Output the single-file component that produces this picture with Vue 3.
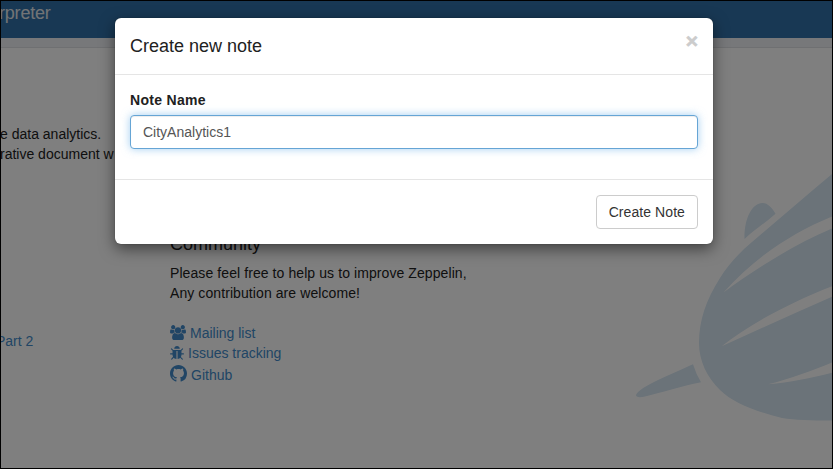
<script setup>
import { ref } from 'vue'

const noteName = ref('CityAnalytics1')

const links = [
  {
    label: 'Mailing list',
    kind: 'users',
    box: '0 0 1920 1792',
    path: 'M593 896q-162 5-265 128h-134q-82 0-138-40.5t-56-118.5q0-353 124-353 6 0 43.5 21t97.5 42.5 119 21.5q67 0 133-23-5 37-5 66 0 139 81 256zm1071 637q0 120-73 189.5t-194 69.5h-874q-121 0-194-69.5t-73-189.5q0-53 3.5-103.5t14-109 26.5-108.5 43-97.5 62-81 85.5-53.5 111.5-20q10 0 43 21.5t73 48 107 48 135 21.5 135-21.5 107-48 73-48 43-21.5q61 0 111.5 20t85.5 53.5 62 81 43 97.5 26.5 108.5 14 109 3.5 103.5zm-1024-1277q0 106-75 181t-181 75-181-75-75-181 75-181 181-75 181 75 75 181zm704 384q0 159-112.5 271.5t-271.5 112.5-271.5-112.5-112.5-271.5 112.5-271.5 271.5-112.5 271.5 112.5 112.5 271.5zm576 225q0 78-56 118.5t-138 40.5h-134q-103-123-265-128 81-117 81-256 0-29-5-66 66 23 133 23 59 0 119-21.5t97.5-42.5 43.5-21q124 0 124 353zm-128-609q0 106-75 181t-181 75-181-75-75-181 75-181 181-75 181 75 75 181z'
  },
  {
    label: 'Issues tracking',
    kind: 'bug',
    box: '96 64 1600 1600',
    path: 'M1696 960q0 26-19 45t-45 19h-224q0 171-67 290l208 209q19 19 19 45t-19 45q-18 19-45 19t-45-19l-198-197q-5 5-15 13t-42 28.5-65 36.5-82 29-97 13v-896h-128v896q-51 0-101.5-13.5t-87-33-66-39-43.5-32.5l-15-14-183 207q-20 21-48 21-24 0-43-16-19-18-20.5-44.5t15.5-46.5l202-227q-58-114-58-274h-224q-26 0-45-19t-19-45 19-45 45-19h224v-294l-173-173q-19-19-19-45t19-45 45-19 45 19l173 173h844l173-173q19-19 45-19t45 19 19 45-19 45l-173 173v294h224q26 0 45 19t19 45zm-480-576h-640q0-133 93.5-226.5t226.5-93.5 226.5 93.5 93.5 226.5z'
  },
  {
    label: 'Github',
    kind: 'github',
    box: '0 0 16 16',
    path: 'M8 0C3.58 0 0 3.58 0 8c0 3.54 2.29 6.53 5.47 7.59.4.07.55-.17.55-.38 0-.19-.01-.82-.01-1.49-2.01.37-2.53-.49-2.69-.94-.09-.23-.48-.94-.82-1.13-.28-.15-.68-.52-.01-.53.63-.01 1.08.58 1.23.82.72 1.21 1.87.87 2.33.66.07-.52.28-.87.51-1.07-1.78-.2-3.64-.89-3.64-3.95 0-.87.31-1.59.82-2.15-.08-.2-.36-1.02.08-2.12 0 0 .67-.21 2.2.82.64-.18 1.32-.27 2-.27s1.36.09 2 .27c1.53-1.04 2.2-.82 2.2-.82.44 1.1.16 1.92.08 2.12.51.56.82 1.27.82 2.15 0 3.07-1.87 3.75-3.65 3.95.29.25.54.73.54 1.48 0 1.07-.01 1.93-.01 2.2 0 .21.15.46.55.38A8.01 8.01 0 0 0 16 8c0-4.42-3.58-8-8-8z'
  }
]
</script>

<template>
  <div class="screen">
    <svg class="zeppelin" viewBox="633 170 199 255" aria-hidden="true">
      <path d="M832 174L813 190L752 242C739 253 728 265 720 278C706 300 699 320 699 343C699 361 707 377 720 390C733 403 755 411 782 418C795 420 811 420.500 832 420.500V372.700C811 378 790 382.500 768 384.300C790 379 811 371 832 362.500V296.700C795 313 757 330 721.700 346.200C748 325 787 304 832 286.200V228.500C795 244 757 268 723.500 292.500C755 257 792 233 832 216.500Z" />
      <path d="M744.500 239C744 219 752 203 762.500 203C768 203 772 208 775.500 213.700C765 223 754 230 744.500 239Z" />
      <path d="M693 364.200Q696 374 701 382.300C682 386 660 393 645 396.500C639 398 636 397 636 395C640 386 672 374 693 364.200Z" />
    </svg>

    <nav class="navbar"><a class="nav-item">rpreter</a></nav>
    <div class="strip"></div>

    <main class="home">
      <section class="intro">
        <p>e data analytics.<br>rative document w</p>
        <a class="link tutorial">Part 2</a>
      </section>
      <section class="community">
        <h4>Community</h4>
        <p>Please feel free to help us to improve Zeppelin,<br>Any contribution are welcome!</p>
        <ul>
          <li v-for="item in links" :key="item.kind" :class="item.kind">
            <a class="link">
              <svg :viewBox="item.box" aria-hidden="true"><path :d="item.path" /></svg>
              <span>{{ item.label }}</span>
            </a>
          </li>
        </ul>
      </section>
    </main>

    <div class="backdrop">
      <div class="modal" role="dialog">
        <header class="modal-header">
          <h4>Create new note</h4>
          <button class="close" type="button">×</button>
        </header>
        <div class="modal-body">
          <label for="noteName">Note Name</label>
          <input id="noteName" v-model="noteName" type="text" autocomplete="off" spellcheck="false">
        </div>
        <footer class="modal-footer">
          <button class="btn" type="button">Create Note</button>
        </footer>
      </div>
    </div>
    <div class="frame"></div>
  </div>
</template>

<style>
body {
  margin: 0;
  overflow: hidden;
}
</style>

<style scoped>
* {
  box-sizing: border-box;
}

.screen {
  position: relative;
  width: 833px;
  height: 469px;
  overflow: hidden;
  background: #fff;
  color: #212121;
  font: 14px/20px "Liberation Sans", Arial, sans-serif;
}

h4,
p,
ul {
  margin: 0;
  padding: 0;
  font-weight: 400;
}

.zeppelin {
  position: absolute;
  right: 1px;
  top: 170px;
  width: 199px;
  height: 255px;
  fill: #d6e6f2;
}

.navbar {
  height: 38px;
  background: #3071a9;
  color: #e4e8ec;
  font-size: 18px;
  line-height: 26px;
}

.nav-item {
  display: block;
  margin-left: -1px;
  letter-spacing: -0.2px;
}

.strip {
  height: 10px;
  background: #eef0f4;
  border-bottom: 1px solid #dfe1e4;
}

.home {
  position: relative;
  display: grid;
  grid-template-columns: 170px 1fr;
  white-space: nowrap;
}

.intro {
  padding-top: 76px;
}

.tutorial {
  display: block;
  margin: 167px 0 0 -4px;
}

.community {
  padding-top: 186px;
}

.community p {
  letter-spacing: 0.085px;
}

.community h4 {
  font-size: 18px;
  font-weight: 500;
  margin-bottom: 9px;
}

.community ul {
  margin-top: 20px;
  list-style: none;
}

.community li {
  height: 20px;
}

.link {
  color: #428bca;
}

li .link {
  display: flex;
  align-items: center;
}

li svg {
  flex: none;
  fill: currentColor;
}

.users svg {
  width: 16px;
  height: 15px;
  margin: -2px 4px 0 0;
}

.bug svg {
  width: 14px;
  height: 14px;
  margin-right: 4px;
}

.community .github {
  padding-top: 2px;
}

.github svg {
  width: 17px;
  height: 17px;
  margin: -4px 4px 0 0;
}

.backdrop {
  position: absolute;
  inset: 0;
  display: flex;
  align-items: flex-start;
  padding: 18px 0 0 115px;
  background: rgba(0, 0, 0, 0.5);
}

.modal {
  width: 598px;
  height: 226px;
  background: #fff;
  border-radius: 6px;
  box-shadow: 0 5px 15px rgba(0, 0, 0, 0.5), 0 0 1px rgba(0, 0, 0, 0.5);
}

.modal-header {
  display: flex;
  justify-content: space-between;
  height: 57px;
  padding: 15px;
  border-bottom: 1px solid #e5e5e5;
}

.modal-header h4 {
  font-size: 18px;
  line-height: 26px;
}

.close {
  height: 16px;
  padding: 0;
  border: 0;
  background: none;
  color: #ccc;
  font: bold 21px/16px "Liberation Sans", Arial, sans-serif;
  -webkit-text-stroke: 0.6px #ccc;
}

.modal-body {
  height: 104px;
  padding: 15px;
}

.modal-body label {
  display: block;
  margin-bottom: 5px;
  font-weight: 700;
  letter-spacing: 0.3px;
}

.modal-body input {
  display: block;
  width: 100%;
  height: 34px;
  padding: 6px 12px;
  border: 1px solid #66a5d5;
  border-radius: 4px;
  outline: 0;
  background: #fff;
  color: #555;
  font: inherit;
  box-shadow: inset 0 1px 1px rgba(0, 0, 0, 0.075), 0 0 8px rgba(102, 175, 233, 0.6);
}

.modal-footer {
  display: flex;
  justify-content: flex-end;
  padding: 15px;
  border-top: 1px solid #e5e5e5;
}

.btn {
  height: 34px;
  padding: 6px 12px;
  border: 1px solid #ccc;
  border-radius: 4px;
  background: #fff;
  color: #333;
  font: inherit;
  letter-spacing: 0.08px;
}

.frame {
  position: absolute;
  inset: 0;
  border: 1px solid #000;
}
</style>
